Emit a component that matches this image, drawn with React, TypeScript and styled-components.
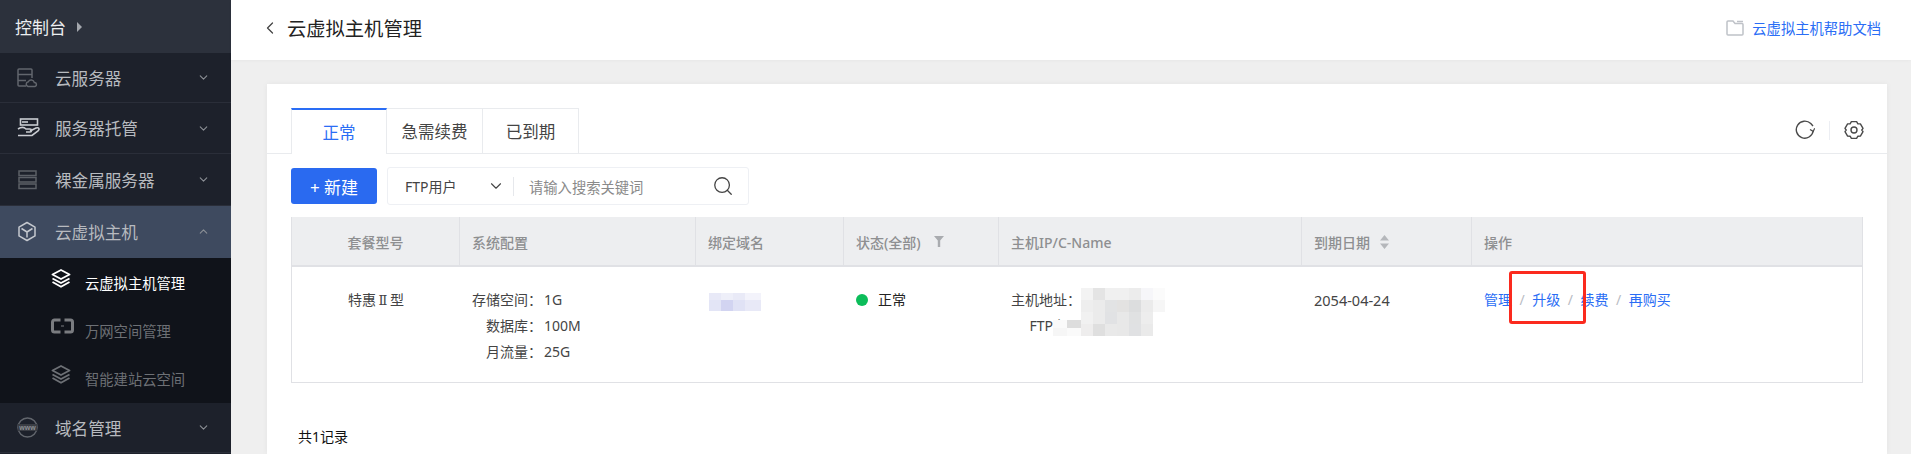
import styled, { createGlobalStyle } from "styled-components";
import { ChevronDown, ChevronLeft, ChevronUp, Search } from "lucide-react";

const GlobalStyle = createGlobalStyle`
  html, body {
    margin: 0;
    height: 100%;
    overflow: hidden;
    background: #efefef;
    font-family: "Noto Sans", "Noto Sans CJK SC", sans-serif;
  }
  * { box-sizing: border-box; }
`;

const COLUMNS = "168px 236px 148px 155px 303px 170px 1fr";

// ---------- sidebar icons ----------
const ServerCloudIcon = () => (
  <svg width="21" height="20" viewBox="0 0 21 20" fill="none" stroke="#62666d" strokeWidth="1.5">
    <path d="M9 18H2a1 1 0 0 1-1-1V2a1 1 0 0 1 1-1h12a1 1 0 0 1 1 1v8" />
    <path d="M1 6.500h14M1 12.500h8" />
    <path d="M11 18.500a2.400 2.400 0 0 1 .3-4.700 3.200 3.200 0 0 1 6 .6 2.100 2.100 0 0 1 .7 4.100z" />
  </svg>
);

const HandIcon = () => (
  <svg width="24" height="20" viewBox="0 0 24 20" fill="none" stroke="#c9ccd1" strokeWidth="1.6">
    <rect x="3.500" y="1" width="17" height="6" fill="#1d212b" />
    <path d="M5 4h6" />
    <path d="M1 11c3-2 6-2 8 0h4c2 0 2 3 0 3H9" />
    <path d="M13 13l6-3c3-1 4 1 2 3l-6 4.500H1" />
  </svg>
);

const BarsIcon = () => (
  <svg width="20" height="20" viewBox="-1 0 20 20" fill="none" stroke="#5c6067" strokeWidth="1.5">
    <rect x="1" y="1" width="17" height="4.500" />
    <rect x="1" y="7.500" width="17" height="4.500" />
    <rect x="1" y="14" width="17" height="4.500" />
  </svg>
);

const CubeIcon = () => (
  <svg width="20" height="21" viewBox="0 0 20 21" fill="none" stroke="#c5c9cf" strokeWidth="1.5">
    <path d="M10 1.500l8 4.600v8.800l-8 4.600-8-4.600V6.100z" strokeLinejoin="round" />
    <path d="M4.500 7.500L10 11l5.500-3.500M10 11v5.500" />
  </svg>
);

const LayersIcon = ({ $color }: { $color: string }) => (
  <svg width="20" height="19" viewBox="0 0 20 19" fill="none" stroke={$color} strokeWidth="1.8">
    <path d="M10 1L18.500 5.500 10 10 1.500 5.500z" strokeLinejoin="round" />
    <path d="M1.500 9.500L10 14l8.500-4.500" />
    <path d="M1.500 13L10 17.800 18.500 13" />
  </svg>
);

const BracketIcon = () => (
  <svg width="23" height="16" viewBox="0 0 23 16" fill="none" stroke="#7a7c80" strokeWidth="3">
    <path d="M9.500 2H3.500a2 2 0 0 0-2 2v8a2 2 0 0 0 2 2H9.500" />
    <path d="M13.500 2h6a2 2 0 0 1 2 2v8a2 2 0 0 1-2 2H13.500" />
    <path d="M10 8h3" strokeWidth="1" />
  </svg>
);

const WwwIcon = () => (
  <svg width="21" height="21" viewBox="0 0 21 21" fill="none">
    <circle cx="10.500" cy="10.500" r="9.500" stroke="#62666d" strokeWidth="1.500" />
    <rect x="1" y="7" width="19" height="7" fill="#3a3d44" />
    <text x="10.500" y="12.800" textAnchor="middle" fontSize="7" fontWeight="700" fill="#8d9095" fontFamily="Liberation Sans">
      www
    </text>
  </svg>
);

// ---------- main area icons ----------
const FolderIcon = () => (
  <svg width="18" height="16" viewBox="0 0 18 16" fill="none" stroke="#bfc2c8" strokeWidth="1.500">
    <path d="M1 14V2a1 1 0 0 1 1-1h5l2 2.500h7a1 1 0 0 1 1 1V14a1 1 0 0 1-1 1H2a1 1 0 0 1-1-1z" />
    <path d="M11 1.500h6" />
  </svg>
);

const RefreshIcon = () => (
  <svg width="20" height="20" viewBox="0 0 20 20" fill="none" stroke="#4a4a4a" strokeWidth="1.400">
    <path d="M18.200 11A8.500 8.500 0 1 1 15.800 3.600L18 6" />
    <path d="M15 9.500l3.200 1.800 1.500-3" strokeWidth="1.200" />
  </svg>
);

const GearIcon = () => (
  <svg width="20" height="20" viewBox="0 0 20 20" fill="none" stroke="#4a4a4a" strokeWidth="1.400">
    <path
      d="M7.400 1.600h5.200l1.300 2.200 2.500.1 2.600 4.400-1.200 1.700 1.200 1.700-2.600 4.400-2.500.1-1.300 2.200H7.400l-1.300-2.200-2.500-.1L1 11.700 2.200 10 1 8.300l2.600-4.400 2.500-.1z"
      strokeLinejoin="round"
    />
    <circle cx="10" cy="10" r="3" />
  </svg>
);

const SortIcon = () => (
  <svg width="9" height="14" viewBox="0 0 9 14" fill="#b5b7bb">
    <path d="M4.500 0L9 5.500H0zM4.500 14L0 8.500h9z" />
  </svg>
);

const FilterIcon = () => (
  <svg width="10" height="11" viewBox="0 0 10 11" fill="#a9abaf">
    <path d="M0 0h10L6.200 4.500V11H3.800V4.500z" />
  </svg>
);

// ---------- layout ----------
const Page = styled.div`
  display: flex;
  height: 100vh;
  overflow: hidden;
`;

const Sidebar = styled.aside`
  width: 231px;
  flex: none;
  background: #1d212b;
  color: #b7babf;
  overflow: hidden;
`;

const SideHead = styled.div`
  height: 53px;
  padding-left: 15px;
  display: flex;
  align-items: center;
  gap: 11px;
  background: #2c313c;
  color: #eceef0;
  font-size: 17px;
`;

const HeadArrow = styled.span`
  width: 0;
  height: 0;
  border-left: 5px solid #a4a7ad;
  border-top: 5px solid transparent;
  border-bottom: 5px solid transparent;
`;

const MenuItem = styled.div<{ $active?: boolean; $height?: number }>`
  height: ${(p) => p.$height ?? 51}px;
  display: flex;
  align-items: center;
  padding: 0 21px 0 17px;
  font-size: 16.600px;
  background: ${(p) => (p.$active ? "#3e4a5f" : "#1d212b")};
  border-bottom: 1px solid ${(p) => (p.$active ? "#3e4a5f" : "#2a2e39")};
`;

const MenuIcon = styled.span`
  width: 38px;
  flex: none;
  display: flex;
  align-items: center;
`;

const MenuLabel = styled.span`
  flex: 1;
`;

const SubMenu = styled.div`
  background: #10131a;
  padding-bottom: 1px;
`;

const SubItem = styled.div<{ $active?: boolean }>`
  height: 48px;
  display: flex;
  align-items: center;
  padding-left: 51px;
  font-size: 14.300px;
  color: ${(p) => (p.$active ? "#ffffff" : "#6d7075")};
`;

const SubIcon = styled.span`
  width: 34px;
  flex: none;
  display: flex;
  margin-top: -8px;
`;

const Main = styled.main`
  flex: 1;
  min-width: 0;
  display: flex;
  flex-direction: column;
`;

const TopBar = styled.header`
  height: 60px;
  flex: none;
  background: #fff;
  display: flex;
  align-items: center;
  justify-content: space-between;
  padding: 0 30px 5px 29px;
  box-shadow: 0 1px 3px rgba(0, 0, 0, 0.03);
`;

const PageTitle = styled.h1`
  margin: 0;
  display: flex;
  align-items: center;
  gap: 7px;
  font-size: 19.300px;
  font-weight: 400;
  color: #222;
`;

const HelpLink = styled.a`
  display: flex;
  align-items: center;
  gap: 8px;
  font-size: 14.300px;
  color: #2a6df5;
`;

const Card = styled.section`
  flex: 1;
  margin: 24px 24px 0 36px;
  padding: 24px 0 0;
  background: #fff;
  box-shadow: 0 0 6px rgba(0, 0, 0, 0.05);
`;

const TabBar = styled.div`
  height: 46px;
  display: flex;
  justify-content: space-between;
  padding: 0 23px 0 24px;
  border-bottom: 1px solid #e9ebee;
`;

const Tabs = styled.div`
  display: flex;
`;

const Tab = styled.div<{ $active?: boolean }>`
  width: 96px;
  height: ${(p) => (p.$active ? 46 : 45)}px;
  display: flex;
  align-items: center;
  justify-content: center;
  font-size: 16.500px;
  color: ${(p) => (p.$active ? "#2a6df5" : "#444")};
  background: #fff;
  border: 1px solid #e9ebee;
  border-left-width: ${(p) => (p.$active ? 1 : 0)}px;
  border-bottom-width: 0;
  border-top: ${(p) => (p.$active ? "2px solid #2a6df5" : "1px solid #e9ebee")};
`;

const TabTools = styled.div`
  display: flex;
  align-items: center;
  gap: 14px;
  margin-bottom: 1px;
`;

const ToolDivider = styled.span`
  width: 1px;
  height: 19px;
  background: #eceef3;
`;

const Toolbar = styled.div`
  display: flex;
  align-items: center;
  gap: 10px;
  padding: 13px 0 0 24px;
`;

const NewButton = styled.button`
  width: 86px;
  height: 36px;
  padding: 0;
  border: 0;
  border-radius: 3px;
  background: #2a6af0;
  color: #fff;
  font: inherit;
  font-size: 17px;
`;

const SearchBox = styled.div`
  width: 362px;
  height: 38px;
  display: flex;
  align-items: center;
  padding: 0 14px 0 17px;
  border: 1px solid #eef0f4;
  border-radius: 3px;
`;

const SearchField = styled.span`
  width: 82px;
  font-size: 14px;
  color: #444;
`;

const SearchDivider = styled.span`
  width: 1px;
  height: 19px;
  margin: 0 15px 0 8px;
  background: #e6e8ec;
`;

const Placeholder = styled.span`
  flex: 1;
  font-size: 14.300px;
  color: #8a8a8a;
`;

const Table = styled.div`
  margin: 12px 24px 0;
  border: 1px solid #e0e1e5;
  border-top: 0;
`;

const HeadRow = styled.div`
  display: grid;
  grid-template-columns: ${COLUMNS};
  height: 50px;
  background: #edeef0;
  border-bottom: 2px solid #e0e1e5;
`;

const HeadCell = styled.div<{ $center?: boolean; $last?: boolean; $gap?: number }>`
  display: flex;
  align-items: center;
  justify-content: ${(p) => (p.$center ? "center" : "flex-start")};
  gap: ${(p) => p.$gap ?? 10}px;
  padding: 1px 12px 0;
  font-size: 14px;
  font-weight: 500;
  color: #8e8f91;
  border-right: ${(p) => (p.$last ? "0" : "1px solid #e0e1e5")};
`;

const BodyRow = styled.div`
  display: grid;
  grid-template-columns: ${COLUMNS};
  height: 115px;
  font-size: 14px;
  color: #444;
`;

const Cell = styled.div<{ $center?: boolean }>`
  position: relative;
  padding: 20px 12px 0;
  line-height: 26px;
  text-align: ${(p) => (p.$center ? "center" : "left")};
`;

const RomanTwo = styled.span`
  display: inline-block;
  width: 14px;
  font-family: "DejaVu Serif", serif;
  font-size: 13px;
  text-align: center;
`;

const DateText = styled.span`
  font-size: 14.500px;
`;

const InfoLine = styled.div`
  display: flex;
`;

const InfoLabel = styled.span`
  width: 70px;
  margin-right: 2px;
  flex: none;
  text-align: right;
`;

const StatusDot = styled.span`
  display: inline-block;
  width: 12px;
  height: 12px;
  margin-right: 10px;
  border-radius: 50%;
  background: #0cbd5a;
  vertical-align: -1px;
`;

const StatusText = styled.span`
  color: #222;
`;

const ActionLink = styled.a`
  color: #2a6df5;
`;

const Slash = styled.span`
  margin: 0 7.500px;
  color: #b9bcc4;
`;

// pixelated patch covering private values in the screenshot
const Mosaic = styled.div<{ $cols: string; $rows: string; $left: number; $top: number }>`
  position: absolute;
  left: ${(p) => p.$left}px;
  top: ${(p) => p.$top}px;
  display: grid;
  grid-template-columns: ${(p) => p.$cols};
  grid-template-rows: ${(p) => p.$rows};
`;

const Pixel = styled.i<{ $c: string }>`
  display: block;
  background: ${(p) => p.$c};
`;

const RedFrame = styled.div`
  position: absolute;
  left: 37px;
  top: 4px;
  width: 77px;
  height: 53px;
  border: 3px solid #fb2a1e;
  border-radius: 3px;
`;

const Total = styled.div`
  margin: 44px 0 0 31px;
  font-size: 14px;
  line-height: 20px;
  color: #111;
`;

const domainPixels = [
  "#e8e9f7", "#eeeff9", "#e9eaf7", "#f3f3fb",
  "#e3e5f6", "#d2d4f1", "#e0e2f5", "#e8e9f7",
];

const hostPixels = [
  "#f3f3f3", "#e4e4e4", "#f0f0f0", "#f0f0f0", "#ececec", "#f6f6f9", "#fbfbfb",
  "#eeeeee", "#ebebeb", "#e2e3e4", "#e3e2e1", "#dcddde", "#ebebeb", "#f6f6f6",
  "#f1f1f1", "#ebebeb", "#e1e2e4", "#e8e8e8", "#e0e1e2", "#ededed", "#ffffff",
  "#eeeded", "#dfdfdf", "#e9e9e9", "#e8e8e8", "#e0e1e3", "#eaeaea", "#ffffff",
];

const ftpPixels = ["#fafafa", "#dddddd", "#f6f6f6", "#fafafa"];

export default function App() {
  return (
    <Page>
      <GlobalStyle />
      <Sidebar>
        <SideHead>
          控制台
          <HeadArrow />
        </SideHead>
        <MenuItem $height={50}>
          <MenuIcon><ServerCloudIcon /></MenuIcon>
          <MenuLabel>云服务器</MenuLabel>
          <ChevronDown size={13} color="#8c9096" />
        </MenuItem>
        <MenuItem>
          <MenuIcon><HandIcon /></MenuIcon>
          <MenuLabel>服务器托管</MenuLabel>
          <ChevronDown size={13} color="#8c9096" />
        </MenuItem>
        <MenuItem $height={52}>
          <MenuIcon><BarsIcon /></MenuIcon>
          <MenuLabel>裸金属服务器</MenuLabel>
          <ChevronDown size={13} color="#8c9096" />
        </MenuItem>
        <MenuItem $active $height={52}>
          <MenuIcon><CubeIcon /></MenuIcon>
          <MenuLabel>云虚拟主机</MenuLabel>
          <ChevronUp size={13} color="#8c9096" />
        </MenuItem>
        <SubMenu>
          <SubItem $active>
            <SubIcon><LayersIcon $color="#ffffff" /></SubIcon>
            云虚拟主机管理
          </SubItem>
          <SubItem>
            <SubIcon><BracketIcon /></SubIcon>
            万网空间管理
          </SubItem>
          <SubItem>
            <SubIcon><LayersIcon $color="#6d7075" /></SubIcon>
            智能建站云空间
          </SubItem>
        </SubMenu>
        <MenuItem $height={50}>
          <MenuIcon><WwwIcon /></MenuIcon>
          <MenuLabel>域名管理</MenuLabel>
          <ChevronDown size={13} color="#8c9096" />
        </MenuItem>
      </Sidebar>

      <Main>
        <TopBar>
          <PageTitle>
            <ChevronLeft size={20} strokeWidth={1.5} color="#444" />
            云虚拟主机管理
          </PageTitle>
          <HelpLink>
            <FolderIcon />
            云虚拟主机帮助文档
          </HelpLink>
        </TopBar>

        <Card>
          <TabBar>
            <Tabs>
              <Tab $active>正常</Tab>
              <Tab>急需续费</Tab>
              <Tab>已到期</Tab>
            </Tabs>
            <TabTools>
              <RefreshIcon />
              <ToolDivider />
              <GearIcon />
            </TabTools>
          </TabBar>

          <Toolbar>
            <NewButton>+ 新建</NewButton>
            <SearchBox>
              <SearchField>FTP用户</SearchField>
              <ChevronDown size={18} strokeWidth={1.5} color="#444" />
              <SearchDivider />
              <Placeholder>请输入搜索关键词</Placeholder>
              <Search size={22} strokeWidth={1.400} color="#444" />
            </SearchBox>
          </Toolbar>

          <Table>
            <HeadRow>
              <HeadCell $center>套餐型号</HeadCell>
              <HeadCell>系统配置</HeadCell>
              <HeadCell>绑定域名</HeadCell>
              <HeadCell $gap={13}>状态(全部)<FilterIcon /></HeadCell>
              <HeadCell>主机IP/C-Name</HeadCell>
              <HeadCell>到期日期<SortIcon /></HeadCell>
              <HeadCell $last>操作</HeadCell>
            </HeadRow>
            <BodyRow>
              <Cell $center>特惠<RomanTwo>Ⅱ</RomanTwo>型</Cell>
              <Cell>
                <InfoLine><InfoLabel>存储空间：</InfoLabel>1G</InfoLine>
                <InfoLine><InfoLabel>数据库：</InfoLabel>100M</InfoLine>
                <InfoLine><InfoLabel>月流量：</InfoLabel>25G</InfoLine>
              </Cell>
              <Cell>
                <Mosaic $left={13} $top={26} $cols="12px 12px 12px 16px" $rows="7px 11px">
                  {domainPixels.map((c, i) => <Pixel key={i} $c={c} />)}
                </Mosaic>
              </Cell>
              <Cell>
                <StatusDot />
                <StatusText>正常</StatusText>
              </Cell>
              <Cell>
                <InfoLine><InfoLabel>主机地址：</InfoLabel></InfoLine>
                <InfoLine><InfoLabel>FTP名：</InfoLabel></InfoLine>
                <Mosaic $left={54} $top={53} $cols="14px 14px" $rows="8px 8px">
                  {ftpPixels.map((c, i) => <Pixel key={i} $c={c} />)}
                </Mosaic>
                <Mosaic $left={82} $top={21} $cols="repeat(7, 12px)" $rows="repeat(4, 12px)">
                  {hostPixels.map((c, i) => <Pixel key={i} $c={c} />)}
                </Mosaic>
              </Cell>
              <Cell><DateText>2054-04-24</DateText></Cell>
              <Cell>
                <ActionLink>管理</ActionLink>
                <Slash>/</Slash>
                <ActionLink>升级</ActionLink>
                <Slash>/</Slash>
                <ActionLink>续费</ActionLink>
                <Slash>/</Slash>
                <ActionLink>再购买</ActionLink>
                <RedFrame />
              </Cell>
            </BodyRow>
          </Table>

          <Total>共1记录</Total>
        </Card>
      </Main>
    </Page>
  );
}
